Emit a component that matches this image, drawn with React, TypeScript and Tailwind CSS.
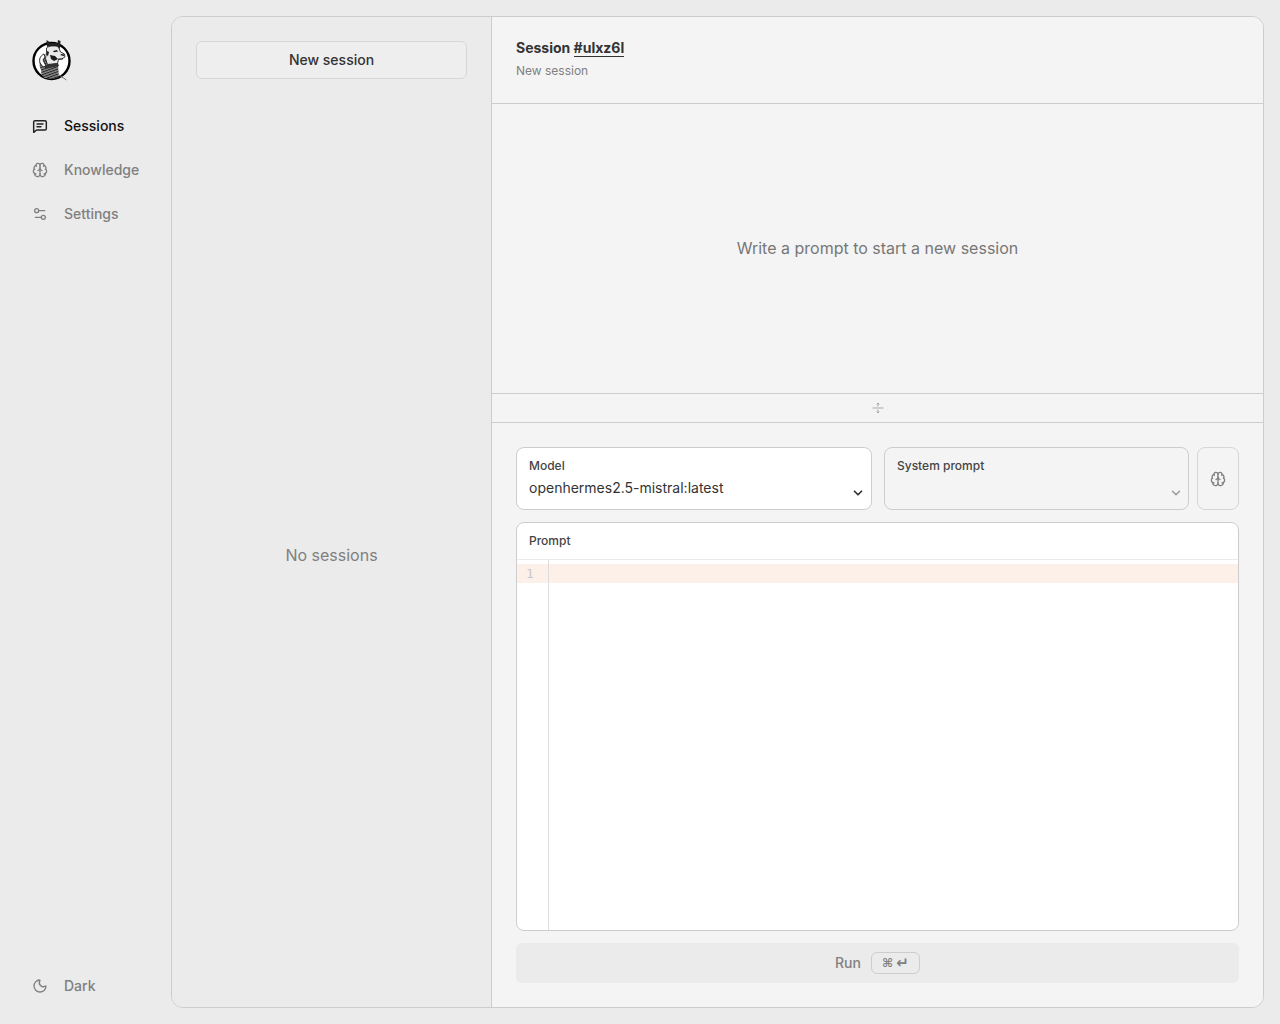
import { Brain, ChevronDown, Moon, Settings2 } from 'lucide-react';

const Logo = () => (
  <svg width="42" height="42" viewBox="0 0 42 42" fill="none">
    <defs>
      <pattern id="hatch" width="2.4" height="2.4" patternUnits="userSpaceOnUse" patternTransform="rotate(-20)">
        <rect width="2.4" height="2.4" fill="#8a8a8a" />
        <rect width="2.4" height="1" fill="#222" />
      </pattern>
    </defs>
    <circle cx="20.5" cy="21" r="18" stroke="#000" strokeWidth="2.4" fill="#fff" />
    {/* body */}
    <path d="M9 21c-1 4 0 7 1 9 0 3 1 6 3 8l9 1 6-2 -1-12-3-4-6 0-3-2-2-2z" fill="url(#hatch)" />
    <path d="M13 14c-4 2-5 5-4 9l3 4 3-1-3-6 2-3z" fill="#fff" stroke="#111" strokeWidth="0.9" />
    {/* ears */}
    <path d="M16 7l-.5-7 3 2 1 4zM26 6l1-6 2.500 1-.5 8z" fill="#222" />
    <path d="M19 3h7v3h-7z" fill="#222" />
    {/* head */}
    <path d="M15.500 8c2-2 8-3 12-1l2 5 4 2 .5 3-3.500 2-3 .5-1 4-10 1-2-6 1-6z" fill="#e8e8e8" stroke="#111" strokeWidth="0.8" />
    <path d="M22 11l4-1 1 1.500-4 .8zM30 14l3.500.5-.5 1.500-3.500-.7zM19 15l5 1 3 3-4 2-3-2zM16 11l2 1-1 4-1.500-1z" fill="#1a1a1a" />
    <path d="M27 19h5" stroke="#111" strokeWidth="0.8" />
    <path d="M14 25l13-2 1 3-14 3z" fill="#333" />
    <path d="M28 35l7.500 5" stroke="#777" strokeWidth="1" />
  </svg>
);

const SessionsIcon = ({ className }: { className?: string }) => (
  <svg width="16" height="16" viewBox="0 0 24 24" fill="none" stroke="currentColor" strokeWidth="2.2" strokeLinecap="round" strokeLinejoin="round" className={className}>
    <path d="M2.500 6a2 2 0 0 1 2-2h15a2 2 0 0 1 2 2v10a2 2 0 0 1-2 2H7l-4.500 3.500z" />
    <path d="M7.500 9h9M7.500 13h6" />
  </svg>
);

const navItems = [
  { label: 'Sessions', icon: SessionsIcon, active: true },
  { label: 'Knowledge', icon: Brain, active: false },
  { label: 'Settings', icon: Settings2, active: false },
];

const ResizeHandle = () => (
  <svg width="14" height="14" viewBox="0 0 14 14" fill="none" stroke="#a9a9a9" strokeWidth="1">
    <path d="M1.500 7h11M7 2.500v3M7 8.500v3" />
    <path d="M5.700 3.500L7 2l1.300 1.500M5.700 10.500L7 12l1.300-1.500" />
  </svg>
);

export default function App() {
  return (
    <div className="flex h-[1024px] bg-[#ebebeb] font-['Inter',sans-serif] text-[#333]">
      <aside className="flex w-[171px] shrink-0 flex-col">
        <div className="pl-[31px] pt-[40px]">
          <Logo />
        </div>
        <nav className="mt-[21px] flex flex-col">
          {navItems.map(item => (
            <a
              key={item.label}
              className={`flex h-[44px] items-center gap-[16px] pl-[32px] text-[14px] font-medium ${
                item.active ? 'text-[#111]' : 'text-[#808080]'
              }`}
            >
              <item.icon size={16} strokeWidth={2} className={`mt-[2px] ${item.active ? 'text-[#222]' : 'text-[#808080]'}`} />
              {item.label}
            </a>
          ))}
        </nav>
        <div className="mt-auto mb-[17px] flex h-[44px] items-center gap-[16px] pl-[32px] text-[14px] font-medium text-[#808080]">
          <Moon size={16} strokeWidth={2} className="mt-[2px]" />
          Dark
        </div>
      </aside>

      <main className="mt-[16px] mr-[16px] flex h-[992px] flex-1 overflow-hidden rounded-xl border border-[#cdcdcd]">
        <section className="flex w-[320px] shrink-0 flex-col border-r border-[#cdcdcd] bg-[#ebebeb] px-[24px] pt-[24px]">
          <button className="h-[38px] w-full rounded-md border border-[#d6d6d6] bg-[#eeeeee] pb-[2px] text-[14px] font-medium text-[#333]">
            New session
          </button>
          <div className="flex flex-1 items-center justify-center pt-[24px] text-[16px] text-[#808080]">No sessions</div>
        </section>

        <section className="flex min-w-0 flex-1 flex-col bg-[#f4f4f4]">
          <header className="h-[87px] shrink-0 border-b border-[#cdcdcd] px-[24px] pt-[21px]">
            <h1 className="text-[14px] leading-[20px] font-bold text-[#333]">
              Session <span className="border-b border-[#333]">#ulxz6l</span>
            </h1>
            <p className="mt-[5px] text-[12px] leading-[16px] text-[#808080]">New session</p>
          </header>

          <div className="flex h-[289px] shrink-0 items-center justify-center pb-[2px] text-[16px] text-[#777]">
            Write a prompt to start a new session
          </div>

          <div className="flex h-[30px] shrink-0 items-center justify-center border-y border-[#cdcdcd]">
            <ResizeHandle />
          </div>

          <div className="flex min-h-0 flex-1 flex-col px-[24px] pt-[24px] pb-[24px]">
            <div className="flex h-[63px] shrink-0">
              <div className="relative w-[356px] shrink-0 rounded-lg border border-[#cdcdcd] bg-white px-[12px] pt-[10px]">
                <div className="text-[12px] leading-[16px] font-medium text-[#444]">Model</div>
                <div className="mt-[4px] text-[14px] leading-[20px] text-[#333]">openhermes2.5-mistral:latest</div>
                <ChevronDown size={14} strokeWidth={3} className="absolute right-[6px] bottom-[9px] text-[#333]" />
              </div>
              <div className="relative ml-[12px] w-[305px] shrink-0 rounded-lg border border-[#cdcdcd] px-[12px] pt-[10px]">
                <div className="text-[12px] leading-[16px] font-medium text-[#444]">System prompt</div>
                <ChevronDown size={14} strokeWidth={2.5} className="absolute right-[5px] bottom-[9px] text-[#999]" />
              </div>
              <button className="ml-[8px] flex w-[42px] shrink-0 items-center justify-center rounded-lg border border-[#d6d6d6] text-[#808080]">
                <Brain size={16} strokeWidth={2} />
              </button>
            </div>

            <div className="mt-[12px] flex h-[409px] shrink-0 flex-col overflow-hidden rounded-lg border border-[#cdcdcd] bg-white">
              <div className="h-[37px] shrink-0 border-b border-[#ebebeb] px-[12px] pt-[10px] text-[12px] leading-[16px] font-medium text-[#444]">
                Prompt
              </div>
              <div className="relative flex-1">
                <div className="absolute inset-y-0 left-[31px] w-px bg-[#dddddd]" />
                <div className="mt-[4px] flex h-[19px] items-center bg-[#fdf0e8] pl-[9px] font-['DejaVu_Sans_Mono',monospace] text-[13px] text-[#c8c8c8]">
                  1
                </div>
              </div>
            </div>

            <button className="mt-[12px] flex h-[40px] shrink-0 items-center justify-center gap-[10px] rounded-md bg-[#ebebeb] text-[14px] font-medium text-[#808080]">
              <span className="pb-[2px]">Run</span>
              <span className="flex h-[22px] w-[49px] items-center justify-center gap-[3px] rounded-md border border-[#cdcdcd] font-['DejaVu_Sans',sans-serif] text-[12px] leading-none font-bold text-[#808080]">
                <span>⌘</span>
                <span className="text-[15px]">↵</span>
              </span>
            </button>
          </div>
        </section>
      </main>
    </div>
  );
}
